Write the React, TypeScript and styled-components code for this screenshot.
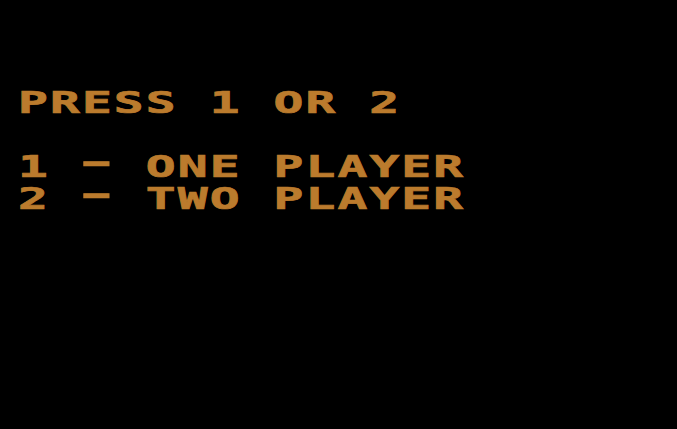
import React from 'react';
import styled, {createGlobalStyle} from 'styled-components';

const GlobalStyle = createGlobalStyle`
    html, body {
        margin: 0;
        padding: 0;
        background: #000;
    }
`;

const amber = '#bb7b2d';

const Screen = styled.div`
    width: 677px;
    height: 429px;
    background: #000;
    overflow: hidden;
    box-sizing: border-box;
    padding: 86px 0 0 18px;
`;

// text rows sit on a 32px character grid, like the console's big-text mode
const Row = styled.div<{$gapAbove?: number}>`
    height: 32px;
    line-height: 32px;
    margin-top: ${(p) => (p.$gapAbove || 0) * 32}px;
    font-family: 'DejaVu Sans Mono', monospace;
    font-weight: bold;
    font-size: 31px;
    letter-spacing: 1.3px;
    color: ${amber};
    -webkit-text-stroke: 0.7px ${amber};
    white-space: pre;
    transform: scaleX(1.6);
    transform-origin: left center;
`;

// the console dash is a full-cell bar, wider and higher than a hyphen
const Dash = styled.span`
    display: inline-block;
    transform: translateY(-4px) scaleX(1.6);
`;

const menu = [
    {key: '1', label: 'ONE PLAYER'},
    {key: '2', label: 'TWO PLAYER'},
];

export default function App() {
    return (
        <>
            <GlobalStyle />
            <Screen>
                <Row>PRESS 1 OR 2</Row>
                {menu.map((item, i) => (
                    <Row key={item.key} $gapAbove={i === 0 ? 1 : 0}>
                        {item.key} <Dash>-</Dash> {item.label}
                    </Row>
                ))}
            </Screen>
        </>
    );
}
